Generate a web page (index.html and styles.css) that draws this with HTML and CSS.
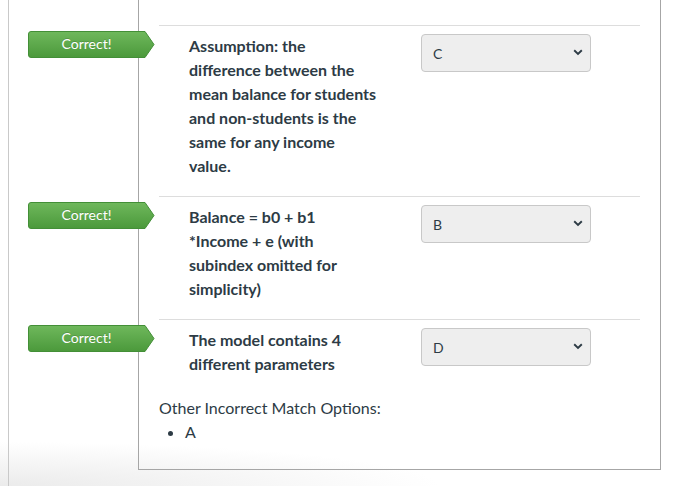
FILE: index.html
```html
<!DOCTYPE html>
<html>
<head>
<meta charset="utf-8">
<link rel="stylesheet" href="styles.css">
</head>
<body>
<div class="page">
  <div class="quiz">
    <div class="row">
      <div class="badge">
        <svg width="127" height="27" viewBox="0 0 127 27"><defs><linearGradient id="g1" x1="0" y1="0" x2="0" y2="1"><stop offset="0" stop-color="#6fb85c"/><stop offset="1" stop-color="#4b993b"/></linearGradient></defs><path d="M0.5,3 Q0.5,0.5 3,0.5 H117 L126,13.5 L117,26.5 H3 Q0.5,26.5 0.5,24 Z" fill="url(#g1)" stroke="#438f37"/></svg>
        <span>Correct!</span>
      </div>
      <div class="left">Assumption: the difference between the mean balance for students and non-students is the same for any income value.</div>
      <div class="pickwrap">
        <select class="pick"><option>C</option></select>
        <svg class="chev" width="10" height="7" viewBox="0 0 10 7"><path d="M1.2,1.3 L5,5 L8.8,1.3" fill="none" stroke="#2d3b45" stroke-width="1.9"/></svg>
      </div>
    </div>
    <div class="row">
      <div class="badge">
        <svg width="127" height="27" viewBox="0 0 127 27"><defs><linearGradient id="g2" x1="0" y1="0" x2="0" y2="1"><stop offset="0" stop-color="#6fb85c"/><stop offset="1" stop-color="#4b993b"/></linearGradient></defs><path d="M0.5,3 Q0.5,0.5 3,0.5 H117 L126,13.5 L117,26.5 H3 Q0.5,26.5 0.5,24 Z" fill="url(#g2)" stroke="#438f37"/></svg>
        <span>Correct!</span>
      </div>
      <div class="left">Balance = b0 + b1 *Income + e (with subindex omitted for simplicity)</div>
      <div class="pickwrap">
        <select class="pick"><option>B</option></select>
        <svg class="chev" width="10" height="7" viewBox="0 0 10 7"><path d="M1.2,1.3 L5,5 L8.8,1.3" fill="none" stroke="#2d3b45" stroke-width="1.9"/></svg>
      </div>
    </div>
    <div class="row last">
      <div class="badge">
        <svg width="127" height="27" viewBox="0 0 127 27"><defs><linearGradient id="g3" x1="0" y1="0" x2="0" y2="1"><stop offset="0" stop-color="#6fb85c"/><stop offset="1" stop-color="#4b993b"/></linearGradient></defs><path d="M0.5,3 Q0.5,0.5 3,0.5 H117 L126,13.5 L117,26.5 H3 Q0.5,26.5 0.5,24 Z" fill="url(#g3)" stroke="#438f37"/></svg>
        <span>Correct!</span>
      </div>
      <div class="left">The model contains 4 different parameters</div>
      <div class="pickwrap">
        <select class="pick"><option>D</option></select>
        <svg class="chev" width="10" height="7" viewBox="0 0 10 7"><path d="M1.2,1.3 L5,5 L8.8,1.3" fill="none" stroke="#2d3b45" stroke-width="1.9"/></svg>
      </div>
    </div>
    <div class="other">
      Other Incorrect Match Options:
      <ul class="opts"><li>A</li></ul>
    </div>
  </div>
</div>
</body>
</html>
```

FILE: styles.css
```css
html, body {
  margin: 0;
  height: 100%;
}

body {
  font-family: Lato, "Liberation Sans", sans-serif;
  color: #2d3b45;
  background: #fff radial-gradient(ellipse 440px 44px at 0 100%, #ebebeb, #ffffff);
  background-repeat: no-repeat;
}

.page {
  margin-left: 8px;
  border-left: 1px solid #c9c9c9;
  min-height: 486px;
  box-sizing: border-box;
  padding-left: 129px;
}

.quiz {
  width: 481px;
  border: 1px solid #a6a6a6;
  border-top: none;
  padding: 25px 20px 25px 20px;
}

.row {
  position: relative;
  border-top: 1px solid #dddddd;
  padding: 8px 0 18px 30px;
  display: flex;
  align-items: flex-start;
  gap: 44px;
}

.left {
  width: 188px;
  font-weight: 700;
  font-size: 16px;
  line-height: 24px;
}

.pickwrap {
  position: relative;
  width: 170px;
  height: 38px;
}

.pick {
  -webkit-appearance: none;
  appearance: none;
  display: block;
  box-sizing: border-box;
  width: 170px;
  height: 38px;
  margin: 0;
  background-color: #eeeeee;
  border: 1px solid #c8c8c8;
  border-radius: 4px;
  font-family: Lato, "Liberation Sans", sans-serif;
  font-size: 14px;
  color: #2d3b45;
  padding: 0 24px 0 11px;
}

.chev {
  position: absolute;
  right: 8px;
  top: 15px;
  pointer-events: none;
}

.badge {
  position: absolute;
  left: -131px;
  top: 5px;
  width: 127px;
  height: 27px;
}

.badge svg {
  display: block;
}

.badge span {
  position: absolute;
  left: 0;
  top: 0;
  width: 117px;
  text-align: center;
  line-height: 26px;
  font-size: 14px;
  color: #ffffff;
  text-shadow: 0 -1px 0 rgba(0, 0, 0, 0.15);
}

.other {
  margin-top: 2px;
  font-size: 16px;
  line-height: 24px;
}

.opts {
  margin: 0;
  padding-left: 26px;
}
```
